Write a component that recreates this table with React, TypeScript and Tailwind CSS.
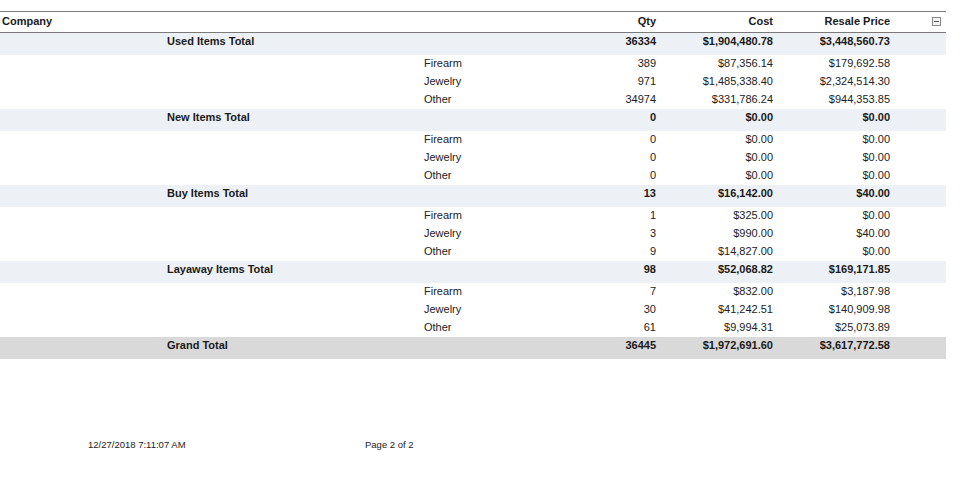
import React from 'react'

interface Line {
  category: string
  qty: string
  cost: string
  resale: string
}

interface Group {
  name: string
  qty: string
  cost: string
  resale: string
  lines: Line[]
}

const groups: Group[] = [
  {
    name: 'Used Items Total',
    qty: '36334',
    cost: '$1,904,480.78',
    resale: '$3,448,560.73',
    lines: [
      { category: 'Firearm', qty: '389', cost: '$87,356.14', resale: '$179,692.58' },
      { category: 'Jewelry', qty: '971', cost: '$1,485,338.40', resale: '$2,324,514.30' },
      { category: 'Other', qty: '34974', cost: '$331,786.24', resale: '$944,353.85' },
    ],
  },
  {
    name: 'New Items Total',
    qty: '0',
    cost: '$0.00',
    resale: '$0.00',
    lines: [
      { category: 'Firearm', qty: '0', cost: '$0.00', resale: '$0.00' },
      { category: 'Jewelry', qty: '0', cost: '$0.00', resale: '$0.00' },
      { category: 'Other', qty: '0', cost: '$0.00', resale: '$0.00' },
    ],
  },
  {
    name: 'Buy Items Total',
    qty: '13',
    cost: '$16,142.00',
    resale: '$40.00',
    lines: [
      { category: 'Firearm', qty: '1', cost: '$325.00', resale: '$0.00' },
      { category: 'Jewelry', qty: '3', cost: '$990.00', resale: '$40.00' },
      { category: 'Other', qty: '9', cost: '$14,827.00', resale: '$0.00' },
    ],
  },
  {
    name: 'Layaway Items Total',
    qty: '98',
    cost: '$52,068.82',
    resale: '$169,171.85',
    lines: [
      { category: 'Firearm', qty: '7', cost: '$832.00', resale: '$3,187.98' },
      { category: 'Jewelry', qty: '30', cost: '$41,242.51', resale: '$140,909.98' },
      { category: 'Other', qty: '61', cost: '$9,994.31', resale: '$25,073.89' },
    ],
  },
]

// colonnes : société | groupe | catégorie | qty | cost | resale | bouton
const cols = 'grid grid-cols-[165px_257px_178px_58px_117px_117px_54px]'

function TotalRow({ label, qty, cost, resale, grand }: { label: string; qty: string; cost: string; resale: string; grand?: boolean }) {
  return (
    <div className={`${cols} h-[22px] font-bold text-[#1a1a1a] ${grand ? 'bg-[#d9d9d9]' : 'bg-[#edf0f4]'}`}>
      <div />
      <div className="pl-[2px] pt-[1px]">{label}</div>
      <div />
      <div className="pr-[2px] pt-[1px] text-right">{qty}</div>
      <div className="pr-[2px] pt-[1px] text-right">{cost}</div>
      <div className="pr-[2px] pt-[1px] text-right">{resale}</div>
      <div />
    </div>
  )
}

export default function App() {
  return (
    <div className="w-[961px] h-[479px] bg-white text-[11px] leading-[14px] text-[#222]" style={{ fontFamily: '"Liberation Sans", Arial, sans-serif' }}>
      <div className="w-[946px] pt-[11px]">
        {/* En-tête */}
        <div className={`${cols} h-[22px] border-t border-b border-[#7a7a7a] font-bold text-[#1a1a1a] items-center`}>
          <div className="pl-[2px] -mt-[3px]">Company</div>
          <div />
          <div />
          <div className="pr-[2px] text-right -mt-[3px]">Qty</div>
          <div className="pr-[2px] text-right -mt-[3px]">Cost</div>
          <div className="pr-[2px] text-right -mt-[3px]">Resale Price</div>
          <div className="flex justify-end pr-[5px] -mt-[1px]">
            <span className="w-[9px] h-[9px] border border-[#8a8a8a] bg-[#f2f2f2] flex items-center justify-center">
              <span className="w-[5px] h-px bg-[#555]" />
            </span>
          </div>
        </div>

        {groups.map(g => (
          <div key={g.name}>
            <TotalRow label={g.name} qty={g.qty} cost={g.cost} resale={g.resale} />
            {g.lines.map(l => (
              <div key={l.category} className={`${cols} h-[18px] items-center`}>
                <div />
                <div />
                <div className="pl-[2px] -mt-[2px]">{l.category}</div>
                <div className="pr-[2px] text-right -mt-[2px]">{l.qty}</div>
                <div className="pr-[2px] text-right -mt-[2px]">{l.cost}</div>
                <div className="pr-[2px] text-right -mt-[2px]">{l.resale}</div>
                <div />
              </div>
            ))}
          </div>
        ))}

        <TotalRow label="Grand Total" qty="36445" cost="$1,972,691.60" resale="$3,617,772.58" grand />
      </div>

      {/* Pied de page */}
      <div className="flex mt-[80px] text-[9.5px] leading-[12px] text-[#222]">
        <div className="w-[365px] pl-[88px]">12/27/2018 7:11:07 AM</div>
        <div>Page 2 of 2</div>
      </div>
    </div>
  )
}
